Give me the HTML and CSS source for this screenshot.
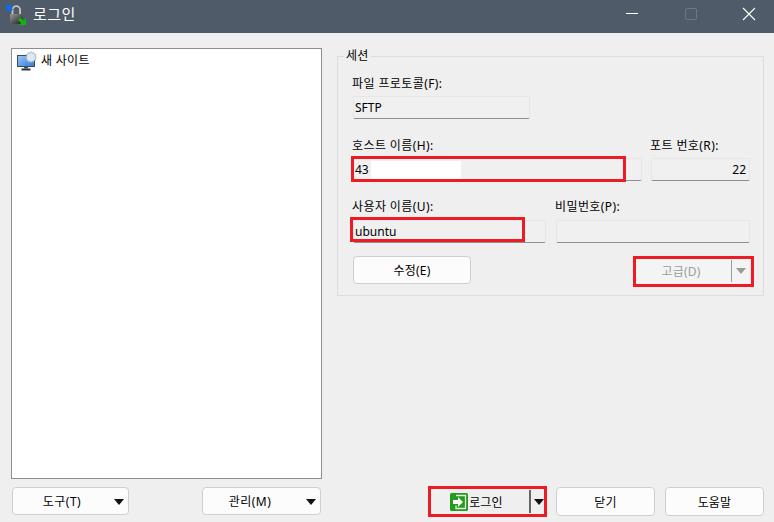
FILE: index.html
```html
<!DOCTYPE html>
<html lang="ko">
<head>
<meta charset="utf-8">
<title>로그인</title>
<link rel="stylesheet" href="styles.css">
</head>
<body>
<div class="window">
  <header class="titlebar">
    <svg class="app-icon" width="21" height="21" viewBox="0 0 21 21">
      <defs>
        <linearGradient id="lockg" x1="0" y1="0" x2="1" y2="1"><stop offset="0" stop-color="#9a9a9a"/><stop offset="1" stop-color="#1c1c1c"/></linearGradient>
      </defs>
      <path d="M6.500 10V5a3.800 3.800 0 0 1 7.600 0V10" fill="none" stroke="#c4c4c4" stroke-width="1.800"/>
      <rect x="4" y="9" width="13" height="10" rx="1" fill="url(#lockg)"/>
      <path d="M0 0h6L4.300 1.700 7 4.400 4.400 7 1.700 4.300 0 6z" fill="#0a6cf0"/>
      <path d="M20 20h-7l2-2-3-3 2.500-2.500 3 3 2.500-2.500z" fill="#0db50d"/>
    </svg>
    <h1 class="title">로그인</h1>
    <div class="controls">
      <svg width="14" height="14" viewBox="0 0 14 14"><path d="M1 6.500h12" stroke="#fff" fill="none"/></svg>
      <svg width="14" height="14" viewBox="0 0 14 14"><rect x="1.500" y="1.500" width="11" height="11" rx="1.500" fill="none" stroke="#6d7785"/></svg>
      <svg width="14" height="14" viewBox="0 0 14 14"><path d="M1 1l12 12M13 1L1 13" stroke="#fff" stroke-width="1.100" fill="none"/></svg>
    </div>
  </header>

  <main class="content">
    <div class="columns">
      <section class="left">
        <div class="tree">
          <div class="tree-item">
            <svg width="20" height="20" viewBox="0 0 20 20">
              <defs><linearGradient id="scr" x1="0" y1="0" x2="1" y2="1"><stop offset="0" stop-color="#9cc8f7"/><stop offset="1" stop-color="#2f78d8"/></linearGradient></defs>
              <rect x=".5" y="4.500" width="17" height="11" fill="url(#scr)" stroke="#3d4a5c"/>
              <rect x="7" y="15.500" width="4" height="2" fill="#4a5564"/>
              <rect x="4.500" y="17.500" width="9" height="2" fill="#2e3744"/>
              <path d="M14 0.500l1 1.800 1.700-1 .3 2 2 .3-1 1.700 1.500 1-1.500 1 1 1.700-2 .3-.3 2-1.700-1-1 1.500-1-1.500-1.700 1-.3-2-2-.3 1-1.700-1.500-1 1.500-1-1-1.700 2-.3.3-2 1.700 1z" fill="#dfe8f0" stroke="#8ea2b5" stroke-width=".6"/>
            </svg>
            <span>새 사이트</span>
          </div>
        </div>
        <div class="left-buttons">
          <button class="btn tool" type="button"><span class="tool-label">도구(T)</span><i class="caret"></i></button>
          <button class="btn tool tool-wide" type="button"><span class="tool-label">관리(M)</span><i class="caret"></i></button>
        </div>
      </section>

      <section class="right">
        <fieldset class="session">
          <legend>세션</legend>
          <div class="field proto">
            <label>파일 프로토콜(F):</label>
            <div class="input">SFTP</div>
          </div>
          <div class="row row-host">
            <div class="field host">
              <label>호스트 이름(H):</label>
              <div class="input">43<span class="mask"></span></div>
            </div>
            <div class="field port">
              <label>포트 번호(R):</label>
              <div class="input num">22</div>
            </div>
          </div>
          <div class="row row-user">
            <div class="field user">
              <label>사용자 이름(U):</label>
              <div class="input">ubuntu</div>
            </div>
            <div class="field pass">
              <label>비밀번호(P):</label>
              <div class="input"></div>
            </div>
          </div>
          <div class="row row-actions">
            <button class="btn edit" type="button">수정(E)</button>
            <div class="split-disabled">
              <span class="split-label">고급(D)</span>
              <span class="split-arrow"><i class="caret grey"></i></span>
            </div>
          </div>
        </fieldset>

        <div class="footer">
          <button class="btn login" type="button">
            <span class="login-main">
              <svg width="18" height="18" viewBox="0 0 18 18">
                <rect width="18" height="18" rx="1.500" fill="#259a1e"/>
                <path d="M6 2.500h9.500v13H6v-3" fill="none" stroke="#dff3dc" stroke-width="1.300"/>
                <path d="M3 7h5V4l5 5-5 5v-3H3z" fill="#fff"/>
              </svg>로그인</span>
            <span class="login-sep"></span>
            <i class="caret"></i>
          </button>
          <button class="btn foot" type="button">닫기</button>
          <button class="btn foot" type="button">도움말</button>
        </div>
      </section>
    </div>
  </main>

  <span class="mark mark-host"></span>
  <span class="mark mark-user"></span>
  <span class="mark mark-adv"></span>
  <span class="mark mark-login"></span>
</div>
</body>
</html>
```

FILE: styles.css
```css
* { box-sizing: border-box; }
html, body { margin: 0; height: 100%; }
body {
  font-family: "Noto Sans", "Noto Sans CJK KR", sans-serif;
  font-size: 12px;
  color: #000;
  background: #efefef;
  overflow: hidden;
}
.window { position: relative; width: 774px; height: 522px; }

.titlebar {
  height: 33px;
  background: #4f5b69;
  display: flex;
  align-items: flex-start;
  padding: 5px 0 0 6px;
  color: #fff;
}
.app-icon { flex: none; }
.title {
  margin: -2px 0 0 6px;
  font-size: 15px;
  line-height: 22px;
  font-weight: 400;
  font-family: "Noto Sans CJK KR", sans-serif;
  letter-spacing: .5px;
}
.controls { margin-left: auto; display: flex; gap: 44.500px; padding: 2px 18px 0 0; }

.content { padding: 15px 10px 0 11px; }
.columns { display: flex; gap: 15px; }
.left { width: 311px; flex: none; }
.tree {
  height: 431px;
  background: #fff;
  border: 1px solid #8a8f96;
  padding: 2px 5px;
}
.tree-item { display: flex; align-items: center; gap: 4px; height: 20px; font-size: 12px; line-height: 20px; letter-spacing: .3px; }
.tree-item span { margin-top: -1px; }
.left-buttons { display: flex; justify-content: space-between; margin-top: 8px; padding: 0 1px; }

.btn {
  font: inherit;
  color: #000;
  background: #fcfcfc;
  border: 1px solid #cfcfcf;
  border-radius: 4px;
  height: 28px;
  padding: 0;
  display: flex;
  align-items: center;
  justify-content: center;
  letter-spacing: .2px;
}
.tool { width: 117px; letter-spacing: .5px; }
.tool .caret { margin: 2px 4px 0 0; flex: none; }
.tool-label { flex: 1; text-align: center; padding: 0 5px 0 2px; }
.tool-wide { width: 119px; }
.tool-wide .tool-label { padding: 0 9px 0 0; }
.caret {
  display: block;
  width: 0; height: 0;
  border-left: 5.500px solid transparent;
  border-right: 5.500px solid transparent;
  border-top: 6px solid #111;
}
.caret.grey { border-top-color: #9a9a9a; }

.right { flex: 1; min-width: 0; }
.session {
  margin: 0;
  height: 248px;
  border: 1px solid #dcdcdc;
  padding: 12px 13px 0 15px;
  min-width: 0;
}
legend { padding: 0 2px; margin-left: -9px; line-height: 16px; font-size: 12px; letter-spacing: .3px; }
.field label { display: block; line-height: 16px; letter-spacing: .4px; margin-left: -1px; }
.input {
  height: 23px;
  margin-top: 5px;
  background: #f0f0f0;
  border: 1px solid #e6e6e6;
  border-bottom: 1px solid #8e8e8e;
  border-radius: 2px;
  line-height: 22px;
  padding-left: 1px;
  font-size: 12px;
  display: flex;
  align-items: center;
}
.input.num { justify-content: flex-end; padding-right: 3px; }
.proto .input { width: 177px; margin-top: 4px; }
.mask { display: inline-block; width: 90px; height: 18px; background: #fff; margin-left: 2px; }
.row { display: flex; }
.row-host { margin-top: 18px; gap: 9px; }
.row-host label { padding-top: 1px; }
.row-host .input { margin-top: 4px; }
.host { width: 289px; }
.port { width: 99px; }
.row-user { margin-top: 18px; gap: 10px; }
.user { width: 193px; }
.pass { width: 194px; }
.row-actions { margin-top: 12px; justify-content: space-between; align-items: center; }
.edit { width: 118px; height: 28px; }
.split-disabled {
  width: 116px;
  height: 27px;
  margin-top: 2px;
  display: flex;
  align-items: center;
  color: #9c9c9c;
  background: #f4f4f4;
  border-radius: 3px;
  letter-spacing: .2px;
}
.split-label { flex: 1; text-align: center; padding-right: 3px; }
.split-arrow { width: 19px; height: 22px; border-left: 1px solid #9c9c9c; display: flex; align-items: center; justify-content: center; }

.footer { display: flex; margin-top: 191px; justify-content: flex-end; gap: 10px; }
.foot { width: 99px; height: 29px; }
.login {
  width: 117px;
  height: 29px;
  background: transparent;
  border: none;
  margin-right: -1px;
}
.login-main { flex: 1; display: flex; align-items: center; justify-content: center; gap: 1px; padding-right: 6px; }
.login-sep { width: 2px; height: 23px; background: #666; margin-right: 3px; }
.login .caret { margin-right: 3px; margin-top: 1px; }

.mark { position: absolute; border: 3px solid #ed1c24; pointer-events: none; }
.mark-host { left: 351px; top: 156px; width: 275px; height: 26px; }
.mark-user { left: 350px; top: 217px; width: 175px; height: 25px; }
.mark-adv { left: 633px; top: 256px; width: 121px; height: 31px; }
.mark-login { left: 428px; top: 486px; width: 119px; height: 31px; }
```
